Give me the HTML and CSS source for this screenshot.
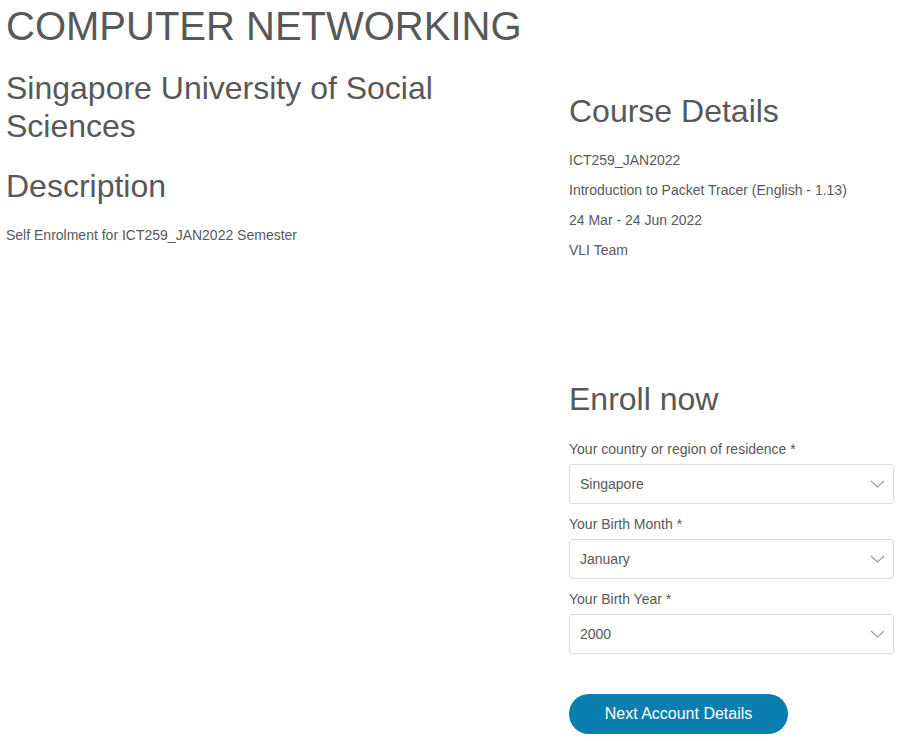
FILE: index.html
```html
<!DOCTYPE html>
<html lang="en">
<head>
<meta charset="utf-8">
<title>Computer Networking</title>
<link rel="stylesheet" href="styles.css">
</head>
<body>
<div class="page">
  <div class="main">
    <h1 class="title">COMPUTER NETWORKING</h1>
    <h2 class="org">Singapore University of Social Sciences</h2>
    <h2 class="section">Description</h2>
    <p class="desc">Self Enrolment for ICT259_JAN2022 Semester</p>
  </div>
  <aside class="side">
    <h2 class="side-heading">Course Details</h2>
    <ul class="details">
      <li>ICT259_JAN2022</li>
      <li>Introduction to Packet Tracer (English - 1.13)</li>
      <li>24 Mar - 24 Jun 2022</li>
      <li>VLI Team</li>
    </ul>
    <h2 class="side-heading enroll">Enroll now</h2>
    <form class="form">
      <label class="label" for="country">Your country or region of residence *</label>
      <div class="select-wrap">
        <select id="country" class="select"><option>Singapore</option></select>
        <svg class="chev" width="15" height="8" viewBox="0 0 15 8"><path d="M1 1l6.5 6L14 1" fill="none" stroke="#9a9a9a" stroke-width="1.1"/></svg>
      </div>
      <label class="label" for="month">Your Birth Month *</label>
      <div class="select-wrap">
        <select id="month" class="select"><option>January</option></select>
        <svg class="chev" width="15" height="8" viewBox="0 0 15 8"><path d="M1 1l6.5 6L14 1" fill="none" stroke="#9a9a9a" stroke-width="1.1"/></svg>
      </div>
      <label class="label" for="year">Your Birth Year *</label>
      <div class="select-wrap">
        <select id="year" class="select"><option>2000</option></select>
        <svg class="chev" width="15" height="8" viewBox="0 0 15 8"><path d="M1 1l6.5 6L14 1" fill="none" stroke="#9a9a9a" stroke-width="1.1"/></svg>
      </div>
      <div class="actions">
        <button type="button" class="btn">Next Account Details</button>
      </div>
    </form>
  </aside>
</div>
</body>
</html>
```
FILE: styles.css
```css
* { box-sizing: border-box; }
html, body { margin: 0; padding: 0; background: #fff; }
body {
  font-family: "Liberation Sans", Arial, sans-serif;
  color: #58585a;
}
.page {
  display: grid;
  grid-template-columns: 551px 325px;
  column-gap: 12px;
  padding: 0 6px;
  align-items: start;
}
.title {
  margin: 2px 0 0;
  font-size: 40px;
  font-weight: 400;
  line-height: 48px;
}
.org, .section, .side-heading {
  font-size: 32px;
  font-weight: 400;
  line-height: 38.4px;
  margin: 0;
}
.org { margin-top: 19px; }
.section { margin-top: 21px; }
.desc {
  margin: 20px 0 0;
  font-size: 14px;
  line-height: 20px;
}
.side-heading { margin-top: 92px; }
.side-heading.enroll { margin-top: 120px; }
.details {
  list-style: none;
  margin: 20px 0 0;
  padding: 0;
  font-size: 14px;
  line-height: 20px;
}
.details li + li { margin-top: 10px; }
.form {
  display: flex;
  flex-direction: column;
  margin-top: 20px;
}
.label {
  font-size: 14px;
  line-height: 20px;
  margin-bottom: 5px;
}
.select-wrap {
  position: relative;
  height: 40px;
  margin-bottom: 10px;
}
.select {
  appearance: none;
  -webkit-appearance: none;
  width: 100%;
  height: 40px;
  border: 1px solid #dcdcdc;
  border-radius: 3px;
  background: #fff;
  padding: 0 40px 0 10px;
  font-family: "Liberation Sans", Arial, sans-serif;
  font-size: 14px;
  color: #58585a;
  outline: none;
}
.chev {
  position: absolute;
  right: 9px;
  top: 16px;
  pointer-events: none;
}
.actions { margin-top: 30px; }
.btn {
  width: 219px;
  height: 40px;
  border: 0;
  border-radius: 20px;
  background: #0a7eae;
  color: #fff;
  font-family: "Liberation Sans", Arial, sans-serif;
  font-size: 16px;
  padding: 0;
  cursor: pointer;
}
```
